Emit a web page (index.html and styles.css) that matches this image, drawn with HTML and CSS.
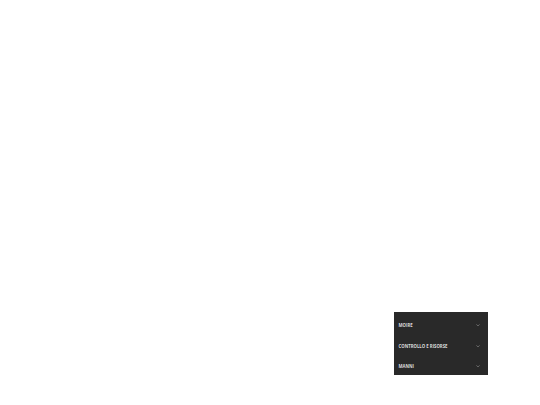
FILE: index.html
```html
<!DOCTYPE html>
<html lang="en">
<head>
    <meta charset="UTF-8">
    <title>Menu</title>
    <link rel="stylesheet" href="styles.css">
</head>
<body>
    <ul class="menu">
        <li class="menu-item">
            <span>MOIRE</span>
            <svg class="chevron" viewBox="0 0 5 3"><path d="M0.5 0.5 L2.5 2.4 L4.5 0.5"/></svg>
        </li>
        <li class="menu-item">
            <span>CONTROLLO E RISORSE</span>
            <svg class="chevron" viewBox="0 0 5 3"><path d="M0.5 0.5 L2.5 2.4 L4.5 0.5"/></svg>
        </li>
        <li class="menu-item">
            <span>MANNI</span>
            <svg class="chevron" viewBox="0 0 5 3"><path d="M0.5 0.5 L2.5 2.4 L4.5 0.5"/></svg>
        </li>
    </ul>
</body>
</html>
```
FILE: styles.css
```css
body {
    margin: 0;
    height: 405px;
    background: #fff;
    font-family: "Open Sans", sans-serif;
    overflow: hidden;
}
.menu {
    list-style: none;
    margin: 312px 0 0 394px;
    padding: 3px 8px 0 4.5px;
    width: 81.5px;
    height: 60px;
    background: #292929;
}
.menu-item {
    display: flex;
    justify-content: space-between;
    align-items: center;
    height: 20.5px;
    color: #dcdcdc;
    font-size: 4.3px;
    font-weight: 700;
}
.chevron {
    width: 4px;
    height: 2.4px;
    fill: none;
    stroke: #909090;
    stroke-width: 0.8;
}
```
